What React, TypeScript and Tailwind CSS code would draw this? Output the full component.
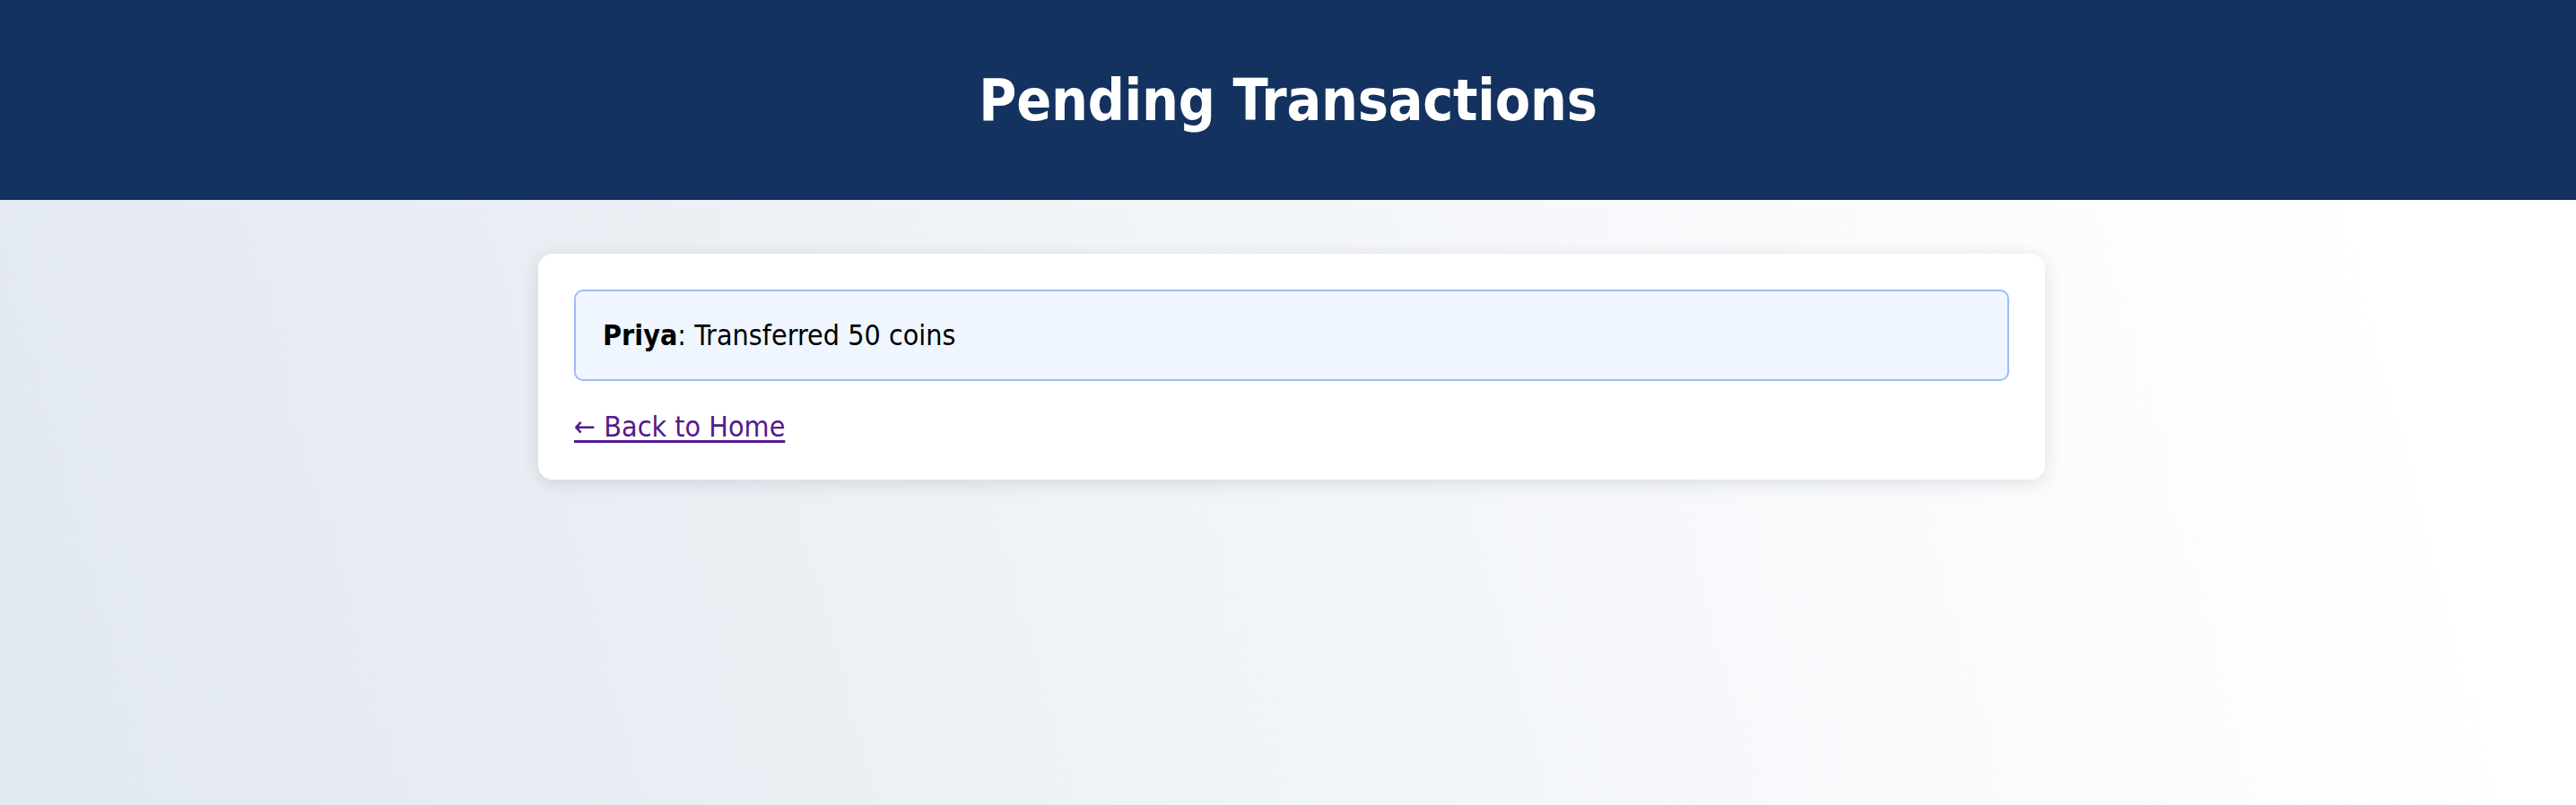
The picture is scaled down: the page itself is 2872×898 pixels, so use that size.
export default function App() {
  return (
    <div className="min-h-screen bg-[linear-gradient(75deg,#e2e8f0_0%,#ffffff_90%)] font-['Tahoma','DejaVu_Sans_Condensed','DejaVu_Sans',sans-serif] [font-stretch:condensed]">
      <header className="h-[223px] bg-[#13325f] flex justify-center">
        <h1 className="text-white font-bold text-[64px] leading-[80px] pt-[72px] m-0 tracking-[-0.3px]">Pending Transactions</h1>
      </header>
      <main className="pt-[60px] pl-[8px]">
        <div className="mx-auto w-[1680px] bg-white rounded-[16px] p-[40px] shadow-[0_4px_20px_rgba(15,23,42,0.12)]">
          <ul className="m-0 p-0 list-none">
            <li className="border-2 border-[#9dbdf6] bg-[#eff6ff] rounded-[10px] px-[30px] py-[30px] text-[32px] leading-[38px] text-black mb-[32px]">
              <strong className="font-bold">Priya</strong>: Transferred 50 coins
            </li>
          </ul>
          <a href="#" className="text-[32px] leading-[38px] text-[#551a8b] underline underline-offset-[4px] decoration-[3px]">← Back to Home</a>
        </div>
      </main>
    </div>
  );
}
